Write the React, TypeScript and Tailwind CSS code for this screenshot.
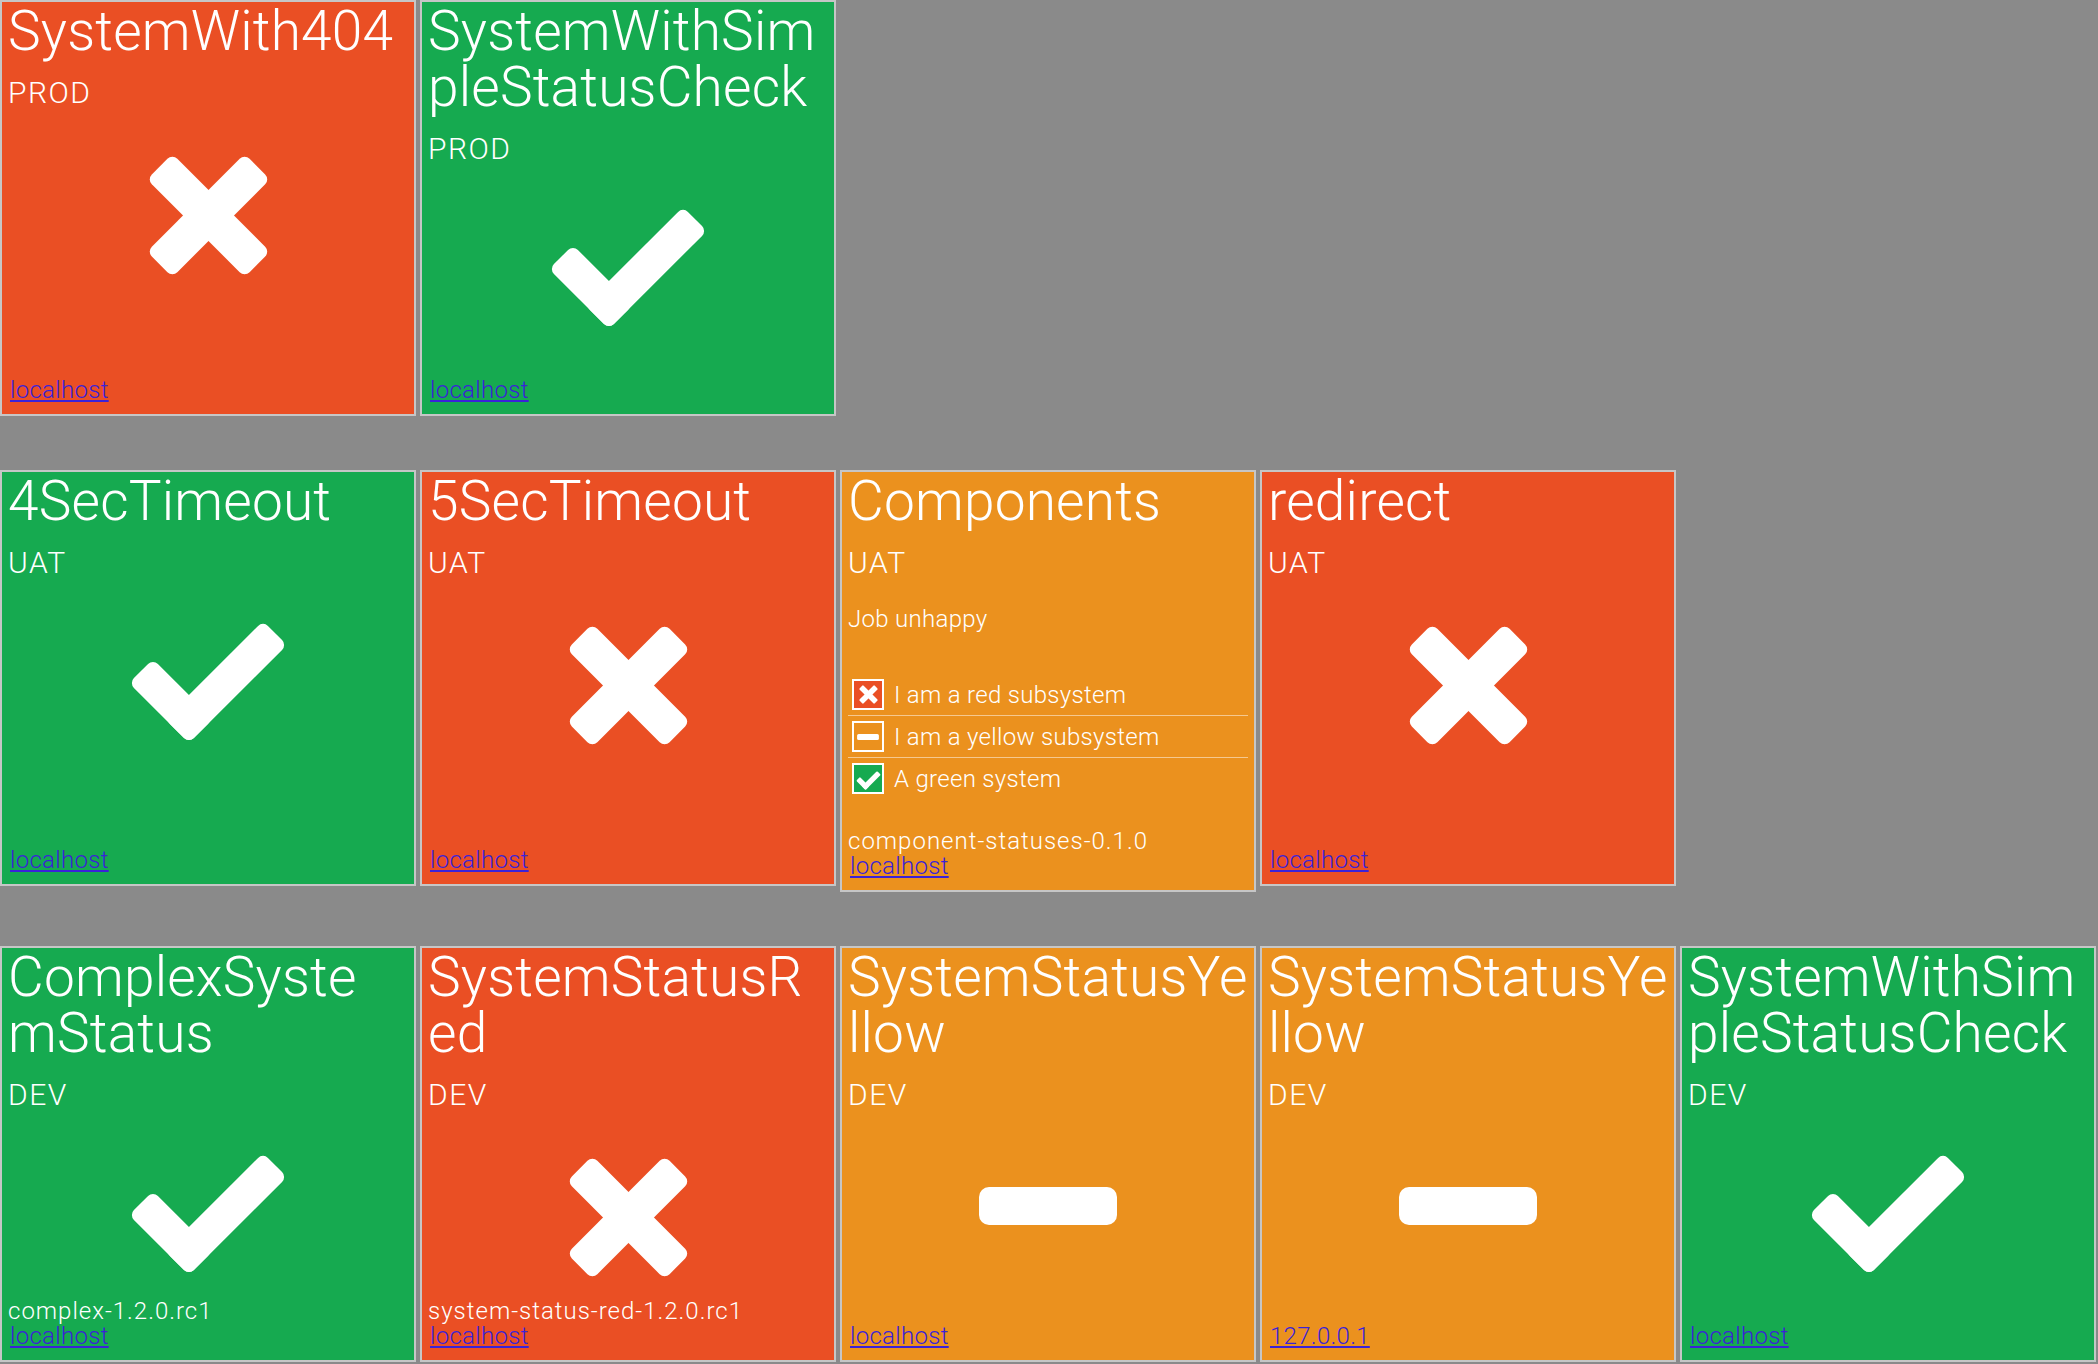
import React from "react";

type Status = "red" | "yellow" | "green";

type Sub = { name: string; status: Status };

type Tile = {
  title: string[];
  env: string;
  status: Status;
  link: string;
  version?: string;
  message?: string;
  subs?: Sub[];
};

const groups: Tile[][] = [
  [
    { title: ["SystemWith404"], env: "PROD", status: "red", link: "localhost" },
    { title: ["SystemWithSim", "pleStatusCheck"], env: "PROD", status: "green", link: "localhost" },
  ],
  [
    { title: ["4SecTimeout"], env: "UAT", status: "green", link: "localhost" },
    { title: ["5SecTimeout"], env: "UAT", status: "red", link: "localhost" },
    {
      title: ["Components"],
      env: "UAT",
      status: "yellow",
      link: "localhost",
      message: "Job unhappy",
      version: "component-statuses-0.1.0",
      subs: [
        { name: "I am a red subsystem", status: "red" },
        { name: "I am a yellow subsystem", status: "yellow" },
        { name: "A green system", status: "green" },
      ],
    },
    { title: ["redirect"], env: "UAT", status: "red", link: "localhost" },
  ],
  [
    { title: ["ComplexSyste", "mStatus"], env: "DEV", status: "green", link: "localhost", version: "complex-1.2.0.rc1" },
    { title: ["SystemStatusR", "ed"], env: "DEV", status: "red", link: "localhost", version: "system-status-red-1.2.0.rc1" },
    { title: ["SystemStatusYe", "llow"], env: "DEV", status: "yellow", link: "localhost" },
    { title: ["SystemStatusYe", "llow"], env: "DEV", status: "yellow", link: "127.0.0.1" },
    { title: ["SystemWithSim", "pleStatusCheck"], env: "DEV", status: "green", link: "localhost" },
  ],
];

const bg: Record<Status, string> = {
  red: "bg-[#ea4f24]",
  yellow: "bg-[#eb911e]",
  green: "bg-[#16aa50]",
};

function CheckIcon({ className }: { className: string }) {
  return (
    <svg className={className} viewBox="-60.1 -122.3 158.4 122.3" fill="white">
      <g transform="rotate(45)">
        <rect x={-34} y={-139} width={34} height={139} rx={7} />
        <rect x={-85} y={-34} width={85} height={34} rx={7} />
      </g>
    </svg>
  );
}

function CrossIcon({ className }: { className: string }) {
  return (
    <svg className={className} viewBox="-61.4 -61.4 122.8 122.8" fill="white">
      <rect x={-69} y={-18} width={138} height={36} rx={7} transform="rotate(45)" />
      <rect x={-69} y={-18} width={138} height={36} rx={7} transform="rotate(-45)" />
    </svg>
  );
}

function MinusIcon({ className }: { className: string }) {
  return (
    <svg className={className} viewBox="0 0 138 38" fill="white">
      <rect x={0} y={0} width={138} height={38} rx={10} />
    </svg>
  );
}

function BigIcon({ status }: { status: Status }) {
  if (status === "green") return <CheckIcon className="w-[158px] h-[122px]" />;
  if (status === "red") return <CrossIcon className="mt-[3px] w-[123px] h-[123px]" />;
  return <MinusIcon className="mt-[34px] w-[138px] h-[38px]" />;
}

function SmallIcon({ status }: { status: Status }) {
  return (
    <div className={`flex h-[31px] w-[32px] shrink-0 items-center justify-center overflow-hidden border-2 border-white ${status === "yellow" ? "" : bg[status]}`}>
      {status === "green" && <CheckIcon className="mt-[3px] h-[19px] w-[25px]" />}
      {status === "red" && <CrossIcon className="h-[19px] w-[19px]" />}
      {status === "yellow" && <MinusIcon className="h-[6px] w-[22px]" />}
    </div>
  );
}

function StatusTile({ tile }: { tile: Tile }) {
  return (
    <div className={`flex min-h-[416px] w-[416px] shrink-0 flex-col border-2 border-[#c6c6c6] px-[6px] pt-[1px] pb-[12px] text-white ${bg[tile.status]}`}>
      <div className="text-[55px] leading-[56px] font-light tracking-[0.2px] whitespace-nowrap">
        {tile.title.map((line, i) => (
          <div key={i}>{line}</div>
        ))}
      </div>
      <div className="mt-[16px] text-[30px] leading-[36px] font-light tracking-[1.5px]">{tile.env}</div>

      {tile.subs ? (
        <>
          <div className="mt-[23px] text-[24px] leading-[30px] font-light tracking-[0.3px]">{tile.message}</div>
          <div className="mt-[40px] mb-[30px]">
            {tile.subs.map((s, i) => (
              <div
                key={s.name}
                className={`flex items-center gap-[10px] py-[5px] pl-[4px] ${i < tile.subs!.length - 1 ? "border-b border-white/50" : ""}`}
              >
                <SmallIcon status={s.status} />
                <span className="text-[24px] leading-[30px] font-light tracking-[0.3px]">{s.name}</span>
              </div>
            ))}
          </div>
        </>
      ) : (
        <div className="mt-[40px] flex justify-center">
          <BigIcon status={tile.status} />
        </div>
      )}

      <div className="mt-auto">
        {tile.version && (
          <div className="text-[24px] leading-[25px] font-light tracking-[1px]">{tile.version}</div>
        )}
        <a href="#" className="block pl-[2px] text-[24px] leading-[24px] font-light tracking-[0.3px] text-[#3a22d8] underline">
          {tile.link}
        </a>
      </div>
    </div>
  );
}

export default function App() {
  return (
    <div className="min-h-screen bg-[#8a8a8a] font-[Roboto,sans-serif]">
      {groups.map((group, gi) => (
        <div key={gi} className="mb-[54px] flex items-start gap-x-[4px] last:mb-0">
          {group.map((tile, ti) => (
            <StatusTile key={ti} tile={tile} />
          ))}
        </div>
      ))}
    </div>
  );
}
